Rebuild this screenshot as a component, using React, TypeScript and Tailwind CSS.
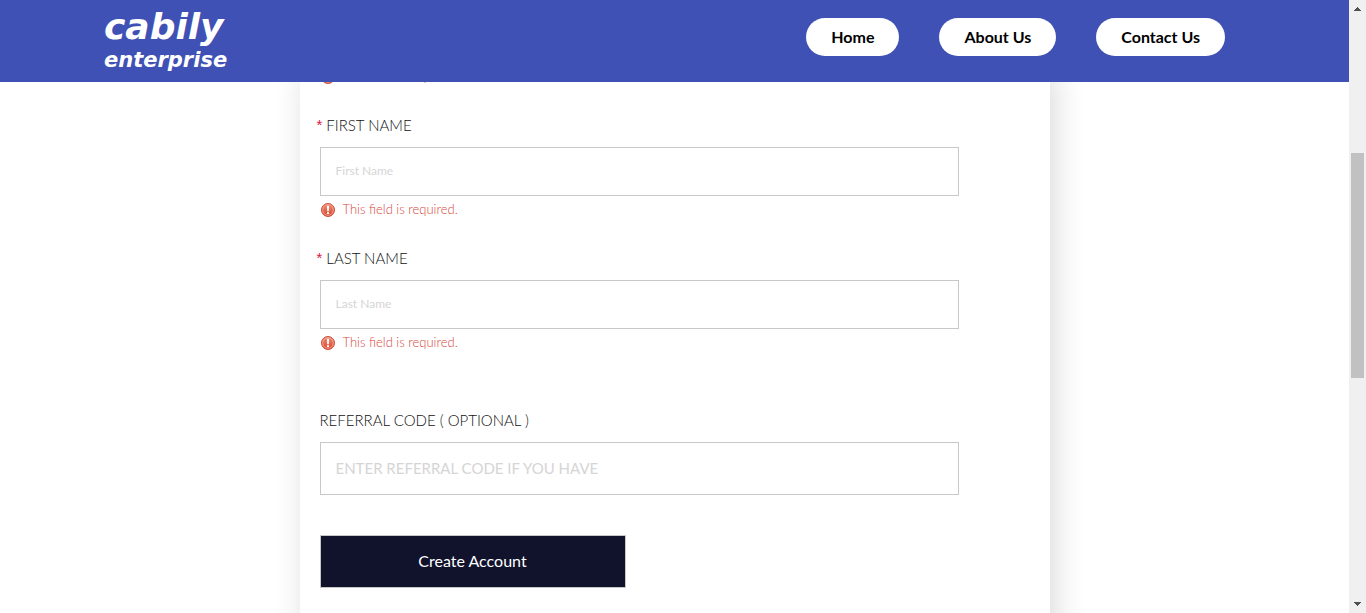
import React from "react";

const navItems = ["Home", "About Us", "Contact Us"];

function Logo() {
  return (
    <a
      href="#home"
      className="flex flex-col font-['DejaVu_Sans',sans-serif] font-bold text-white italic"
    >
      <span className="text-[36px] leading-[42px]">cabily</span>
      <span className="text-[21px] leading-[25px]">enterprise</span>
    </a>
  );
}

function Header() {
  return (
    <header className="relative z-10 flex h-[82px] shrink-0 items-start justify-between bg-[#3f51b5] pt-1.5 pr-[124px] pl-[104px]">
      <Logo />
      <nav className="flex gap-10 pt-3">
        {navItems.map((item) => (
          <a
            key={item}
            href="#"
            className="flex h-[38px] items-center rounded-full bg-white px-[25px] text-[16px] font-bold whitespace-nowrap text-black"
          >
            {item}
          </a>
        ))}
      </nav>
    </header>
  );
}

function ErrorIcon() {
  return (
    <svg viewBox="0 0 14 14" className="size-[14px] shrink-0" aria-hidden="true">
      <defs>
        <linearGradient id="errorFill" x1="0" y1="0" x2="0" y2="1">
          <stop offset="0" stopColor="#f28a70" />
          <stop offset="1" stopColor="#d9442f" />
        </linearGradient>
      </defs>
      <circle cx="7" cy="7" r="6.5" fill="url(#errorFill)" stroke="#c9503f" />
      <circle cx="7" cy="7" r="5.3" fill="none" stroke="#f6ab98" strokeWidth="0.8" />
      <path d="M5.900 2.800h2.200l-.3 5.400H6.200z" fill="#fff" />
      <circle cx="7" cy="10.200" r="1.100" fill="#fff" />
    </svg>
  );
}

function FieldError({ id }: { id: string }) {
  return (
    <p id={id} className="flex h-5 items-center gap-2 pl-px text-[13px] font-light text-[#d9453c]">
      <ErrorIcon />
      <span>This field is required.</span>
    </p>
  );
}

function RequiredField({ id, label, placeholder }: { id: string; label: string; placeholder: string }) {
  return (
    <div className="mb-7">
      <label htmlFor={id} className="-ml-[3px] flex h-8 gap-1 text-[15px] leading-5 font-light text-[#111]">
        <span className="font-['Liberation_Sans',sans-serif] text-[#dc143c]">*</span>
        {label}
      </label>
      <input
        id={id}
        type="text"
        placeholder={placeholder}
        aria-describedby={`${id}-error`}
        className="mb-1 block h-[49px] w-9/10 border border-[#c8c8c8] bg-white px-[15px] pb-0.5 text-[12px] text-[#333] outline-none placeholder:text-[#d5d5d5]"
      />
      <FieldError id={`${id}-error`} />
    </div>
  );
}

function SignupForm() {
  return (
    <form className="mx-auto -mt-[15px] w-full max-w-[750px] bg-white px-5 pb-20 shadow-[5px_5px_30px_rgba(0,0,0,0.15)]">
      <div className="mb-7">
        <FieldError id="email-error" />
      </div>
      <RequiredField id="first-name" label="FIRST NAME" placeholder="First Name" />
      <RequiredField id="last-name" label="LAST NAME" placeholder="Last Name" />
      <label htmlFor="referral" className="mt-14 block h-[33px] text-[15px] leading-[22px] font-light text-[#111]">
        REFERRAL CODE ( OPTIONAL )
      </label>
      <input
        id="referral"
        type="text"
        placeholder="ENTER REFERRAL CODE IF YOU HAVE"
        className="block h-[53px] w-9/10 border border-[#c8c8c8] bg-white px-[15px] pb-0.5 text-[15px] text-[#333] outline-none placeholder:text-[#d5d5d5]"
      />
      <button
        type="button"
        className="mt-10 block h-[53px] w-[306px] border border-[#c8c8c8] bg-[#11122c] pb-0.5 text-[16px] text-white"
      >
        Create Account
      </button>
    </form>
  );
}

function ScrollRail() {
  return (
    <div aria-hidden="true" className="flex w-[17px] shrink-0 flex-col items-center bg-[#f0f0f0]">
      <svg viewBox="0 0 17 17" className="size-[17px]" shapeRendering="crispEdges">
        <path d="M5 11h7v-1h-1V9h-1V8H9V7H8v1H7v1H6v1H5z" fill="#505050" />
      </svg>
      <div className="grow-136" />
      <div className="w-[13px] grow-225 bg-[#c1c1c1]" />
      <div className="grow-218" />
      <svg viewBox="0 0 17 17" className="size-[17px]" shapeRendering="crispEdges">
        <path d="M5 6h7v1h-1v1h-1v1H9v1H8V9H7V8H6V7H5z" fill="#505050" />
      </svg>
    </div>
  );
}

export default function App() {
  return (
    <div className="flex h-screen overflow-hidden bg-white font-['Lato',sans-serif]">
      <div className="flex min-w-0 flex-1 flex-col">
        <Header />
        <main className="min-h-0 flex-1">
          <SignupForm />
        </main>
      </div>
      <ScrollRail />
    </div>
  );
}
